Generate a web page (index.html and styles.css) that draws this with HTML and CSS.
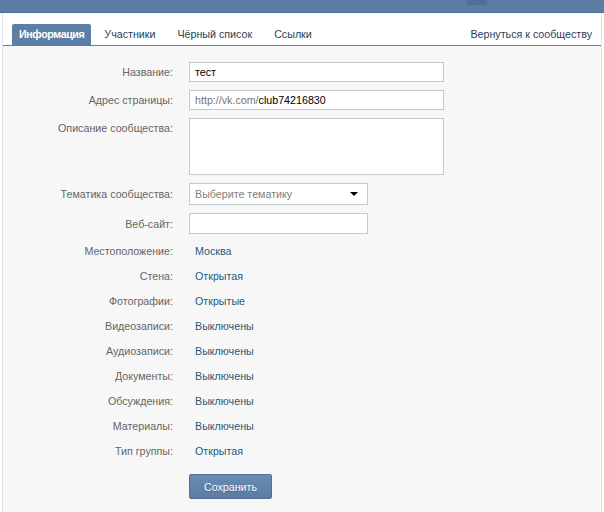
FILE: index.html
```html
<!DOCTYPE html>
<html lang="ru">
<head>
<meta charset="utf-8">
<title>Управление сообществом</title>
<link rel="stylesheet" href="styles.css">
</head>
<body>
<div class="topbar"><div class="topbar-tab"></div></div>
<div class="page">
  <div class="tabs">
    <a class="tab active">Информация</a>
    <a class="tab">Участники</a>
    <a class="tab">Чёрный список</a>
    <a class="tab">Ссылки</a>
    <a class="tab back">Вернуться к сообществу</a>
  </div>
  <div class="form">
    <div class="row">
      <div class="label">Название:</div>
      <div class="field input wide"><span class="val">тест</span></div>
    </div>
    <div class="row">
      <div class="label">Адрес страницы:</div>
      <div class="field input wide"><span class="prefix">http://vk.com/</span><span class="val">club74216830</span></div>
    </div>
    <div class="row top">
      <div class="label pad">Описание сообщества:</div>
      <div class="field textarea wide"></div>
    </div>
    <div class="row">
      <div class="label">Тематика сообщества:</div>
      <div class="field select narrow"><span class="placeholder">Выберите тематику</span><span class="arrow"></span></div>
    </div>
    <div class="row">
      <div class="label">Веб-сайт:</div>
      <div class="field input narrow web"></div>
    </div>
    <div class="info">
      <div class="irow"><div class="label">Местоположение:</div><a class="link">Москва</a></div>
      <div class="irow"><div class="label">Стена:</div><a class="link">Открытая</a></div>
      <div class="irow"><div class="label">Фотографии:</div><a class="link">Открытые</a></div>
      <div class="irow"><div class="label">Видеозаписи:</div><a class="link">Выключены</a></div>
      <div class="irow"><div class="label">Аудиозаписи:</div><a class="link">Выключены</a></div>
      <div class="irow"><div class="label">Документы:</div><a class="link">Выключены</a></div>
      <div class="irow"><div class="label">Обсуждения:</div><a class="link">Выключены</a></div>
      <div class="irow"><div class="label">Материалы:</div><a class="link">Выключены</a></div>
      <div class="irow"><div class="label">Тип группы:</div><a class="link">Открытая</a></div>
    </div>
    <div class="actions">
      <button class="btn">Сохранить</button>
    </div>
  </div>
</div>
</body>
</html>
```

FILE: styles.css
```css
html, body {
  margin: 0;
  padding: 0;
  background: #ffffff;
  font-family: "Liberation Sans", Arial, sans-serif;
  font-size: 10.7px;
  color: #000;
}
.topbar {
  height: 12px;
  background: #5b7ca3;
  border-bottom: 1px solid #4b6c93;
  display: flex;
  justify-content: flex-end;
}
.topbar-tab {
  width: 20px;
  height: 5px;
  background: #4e6f96;
  margin-right: 117px;
  border-radius: 0 0 2px 2px;
}
.page {
  margin: 0 2px;
  border-left: 1px solid #dde3ea;
  border-right: 1px solid #dde3ea;
  min-height: 499px;
  background: #f7f7f7;
}
.tabs {
  height: 32px;
  background: #ffffff;
  border-bottom: 1px solid #5f7fa3;
  display: flex;
  align-items: flex-end;
  padding: 0 9px 0 9px;
}
.tab {
  height: 21px;
  line-height: 21px;
  padding: 0 8px;
  margin-right: 6px;
  color: #283f5a;
  white-space: nowrap;
}
.tab.active {
  background: #5b7fa6;
  color: #ffffff;
  font-weight: bold;
  letter-spacing: -0.4px;
  border-radius: 2px 2px 0 0;
  padding: 0 7px;
  margin-right: 5px;
}
.tab.back {
  margin-left: auto;
  margin-right: 0;
  padding-right: 0;
}
.form {
  padding-top: 16px;
}
.row {
  display: grid;
  grid-template-columns: 170px auto;
  column-gap: 16px;
  align-items: center;
  margin-bottom: 8px;
}
.row.top {
  align-items: start;
}
.label {
  text-align: right;
  color: #666666;
  white-space: nowrap;
}
.label.pad {
  padding-top: 4px;
}
.field {
  background: #ffffff;
  border: 1px solid #c0cad5;
  box-sizing: border-box;
  display: flex;
  align-items: center;
  padding: 0 5px;
}
.wide { width: 255px; }
.narrow { width: 179px; }
.input { height: 20px; }
.web { height: 21px; }
.textarea { height: 57px; border-color: #c6c9cc; }
.select { height: 22px; justify-content: space-between; padding-right: 9px; }
.prefix { color: #777777; }
.val { color: #000000; }
.placeholder { color: #808080; }
.arrow {
  width: 0;
  height: 0;
  border-left: 4px solid transparent;
  border-right: 4px solid transparent;
  border-top: 4px solid #000;
}
.info {
  margin-top: -4px;
}
.irow {
  display: grid;
  grid-template-columns: 170px auto;
  column-gap: 22px;
  align-items: center;
  height: 25px;
}
.link {
  color: #2b587a;
}
.actions {
  padding-left: 186px;
  margin-top: 11px;
}
.btn {
  width: 83px;
  height: 25px;
  border: 1px solid #4f7298;
  border-radius: 2px;
  background: linear-gradient(#6b8cb2, #5a7ca2);
  color: #ffffff;
  font-family: "Liberation Sans", Arial, sans-serif;
  font-size: 10.7px;
  text-shadow: 0 1px 0 #45658a;
  padding: 0;
}
```
